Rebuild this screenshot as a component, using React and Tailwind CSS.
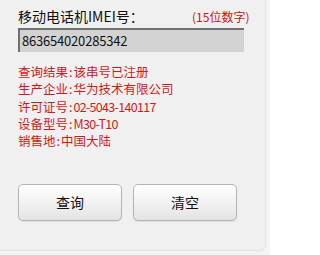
export default function App() {
  const cjk = { fontFamily: '"Noto Sans CJK SC", "Noto Sans", sans-serif' };
  const lines = [
    ["查询结果", "该串号已注册", false],
    ["生产企业", "华为技术有限公司", false],
    ["许可证号", "02-5043-140117", true],
    ["设备型号", "M30-T10", true],
    ["销售地", "中国大陆", false],
  ];
  return (
    <div className="w-[270px] h-[255px] bg-[#f4f4f4]" style={cjk}>
      <div className="w-[266px] h-[251px] bg-[#f0f0f0] border-r border-b border-[#e2e2e2] rounded-br-[6px] pl-[18px] pt-[6px]">
        <div className="flex items-center h-[20px]">
          <span className="w-[174px] text-[14px] leading-[20px] text-[#111]">移动电话机IMEI号：</span>
          <span className="text-[12px] leading-[20px] text-[#cc1111] mt-[1px]">(15位数字)</span>
        </div>
        <div className="mt-[2px] w-[226px] h-[24px] bg-[#d3d3d3] border-t-2 border-l-2 border-t-[#707070] border-l-[#707070] flex items-center pl-[2px]">
          <span className="text-[13px] leading-[16px] text-[#111] tracking-[-0.2px]">863654020285342</span>
        </div>
        <div className="mt-[11px] flex flex-col gap-[0.3px]">
          {lines.map(([k, v, mono]) => (
            <div key={k} className="h-[17px] flex items-center text-[12.5px] leading-[17px] text-[#d11a1a]">
              <span>{k}</span>
              <span className="mx-[1px]">:</span>
              <span className={mono ? "tracking-[-0.7px]" : ""}>{v}</span>
            </div>
          ))}
        </div>
        <div className="mt-[35px] flex gap-[11px]">
          <button className="w-[104px] h-[37px] rounded-[5px] border border-[#b4b4b4] bg-gradient-to-b from-[#ffffff] to-[#e4e4e4] text-[14px] text-[#111] shadow-[0_1px_1px_rgba(0,0,0,0.08)]">
            查询
          </button>
          <button className="w-[104px] h-[37px] rounded-[5px] border border-[#b4b4b4] bg-gradient-to-b from-[#ffffff] to-[#e4e4e4] text-[14px] text-[#111] shadow-[0_1px_1px_rgba(0,0,0,0.08)]">
            清空
          </button>
        </div>
      </div>
    </div>
  );
}
